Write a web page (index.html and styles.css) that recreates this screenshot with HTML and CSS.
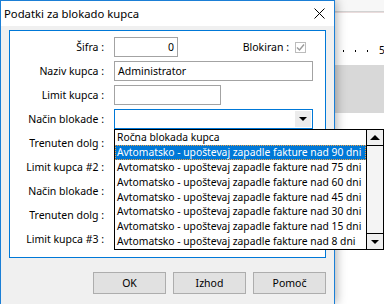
FILE: index.html
```html
<!DOCTYPE html>
<html lang="sl">
<head>
    <meta charset="UTF-8">
    <meta name="viewport" content="width=device-width, initial-scale=1.0">
    <title>Podatki za blokado kupca</title>
    <link rel="stylesheet" href="styles.css">
</head>
<body>
    <div class="screen">
        <div class="dialog">
            <div class="titlebar">
                <span class="title">Podatki za blokado kupca</span>
                <svg class="close" width="11" height="11" viewBox="0 0 11 11">
                    <path d="M0.5 0.5 L10.5 10.5 M10.5 0.5 L0.5 10.5" stroke="#000" stroke-width="1" fill="none"/>
                </svg>
            </div>

            <div class="dialog-body">
                <div class="panel">
                    <div class="form">
                        <label class="label">Šifra :</label>
                        <div class="field-row">
                            <div class="textbox w-short">0</div>
                            <div class="blokiran">
                                <span>Blokiran :</span>
                                <span class="checkbox">
                                    <svg width="9" height="9" viewBox="0 0 9 9">
                                        <path d="M1 4.5 L3.5 7 L8 1.5" stroke="#9a9a9a" stroke-width="1.4" fill="none"/>
                                    </svg>
                                </span>
                            </div>
                        </div>

                        <label class="label">Naziv kupca :</label>
                        <div class="textbox w-full">Administrator</div>

                        <label class="label">Limit kupca :</label>
                        <div class="textbox w-mid"></div>

                        <label class="label">Način blokade :</label>
                        <div class="select-wrap">
                            <div class="select">
                                <span class="select-btn"><span class="arrow-down"></span></span>
                            </div>
                            <div class="dropdown">
                                <div class="options">
                                    <div class="option">Ročna blokada kupca</div>
                                    <div class="option selected">Avtomatsko - upoštevaj zapadle fakture nad 90 dni</div>
                                    <div class="option">Avtomatsko - upoštevaj zapadle fakture nad 75 dni</div>
                                    <div class="option">Avtomatsko - upoštevaj zapadle fakture nad 60 dni</div>
                                    <div class="option">Avtomatsko - upoštevaj zapadle fakture nad 45 dni</div>
                                    <div class="option">Avtomatsko - upoštevaj zapadle fakture nad 30 dni</div>
                                    <div class="option">Avtomatsko - upoštevaj zapadle fakture nad 15 dni</div>
                                    <div class="option">Avtomatsko - upoštevaj zapadle fakture nad 8 dni</div>
                                </div>
                                <div class="scrollbar">
                                    <div class="sb-btn"><span class="arrow-up"></span></div>
                                    <div class="sb-track"></div>
                                    <div class="sb-btn"><span class="arrow-down"></span></div>
                                </div>
                            </div>
                        </div>

                        <label class="label">Trenuten dolg :</label>
                        <div class="textbox w-mid"></div>

                        <label class="label">Limit kupca #2 :</label>
                        <div class="textbox w-mid"></div>

                        <label class="label">Način blokade :</label>
                        <div class="textbox w-full"></div>

                        <label class="label">Trenuten dolg :</label>
                        <div class="textbox w-mid"></div>

                        <label class="label">Limit kupca #3 :</label>
                        <div class="textbox w-mid"></div>
                    </div>
                </div>

                <div class="buttons">
                    <div class="button">OK</div>
                    <div class="button">Izhod</div>
                    <div class="button">Pomoč</div>
                </div>
            </div>
        </div>

        <div class="backwin">
            <div class="bw-top"></div>
            <div class="bw-line"></div>
            <div class="bw-ruler">
                <span class="dot"></span>
                <span class="dot"></span>
                <span class="dot"></span>
                <span class="num">5</span>
            </div>
            <div class="bw-band"></div>
            <div class="bw-rest"></div>
        </div>
    </div>
</body>
</html>
```

FILE: styles.css
```css
* {
    box-sizing: border-box;
}

html, body {
    margin: 0;
}

body {
    width: 384px;
    height: 304px;
    overflow: hidden;
    background-color: #fff;
    color: #000;
    font-family: "Noto Sans", "Open Sans", sans-serif;
    font-size: 10.5px;
}

.screen {
    display: flex;
    height: 304px;
    overflow: hidden;
}

/* dialog window */
.dialog {
    position: relative;
    z-index: 1;
    flex: none;
    width: 335px;
    height: 304px;
    background-color: #f0f0f0;
    border: 1px solid #1b7fd6;
    border-bottom: none;
    box-shadow: 1px 0 10px rgba(0, 0, 0, 0.35);
}

.titlebar {
    display: flex;
    align-items: center;
    justify-content: space-between;
    height: 25px;
    padding: 0 9px 0 3px;
    background-color: #fff;
}

.title {
    font-size: 11.3px;
}

.dialog-body {
    padding: 4px 8px 0 8px;
}

.panel {
    height: 228px;
    padding: 6px 0 0 0;
    background-color: #fff;
    border: 1px solid #0078d7;
}

.form {
    display: grid;
    grid-template-columns: 94px 1fr;
    grid-auto-rows: 20px;
    column-gap: 10px;
    row-gap: 4px;
    align-items: center;
}

.label {
    text-align: right;
    white-space: nowrap;
}

.field-row {
    display: flex;
    align-items: center;
}

.textbox {
    height: 20px;
    padding: 0 3px;
    line-height: 18px;
    background-color: #fff;
    border: 1px solid #a3a3a3;
    white-space: nowrap;
}

.w-short {
    width: 64px;
    text-align: right;
}

.w-mid {
    width: 107px;
}

.w-full {
    width: 199px;
}

.blokiran {
    display: flex;
    align-items: center;
    gap: 6px;
    margin-left: auto;
    margin-right: 19px;
}

.checkbox {
    display: flex;
    align-items: center;
    justify-content: center;
    width: 11px;
    height: 11px;
    border: 1px solid #bcbcbc;
    background-color: #fff;
}

/* combo box */
.select-wrap {
    position: relative;
    height: 20px;
}

.select {
    display: flex;
    justify-content: flex-end;
    width: 199px;
    height: 20px;
    border: 1px solid #0078d7;
    background-color: #fff;
}

.select-btn {
    display: flex;
    align-items: center;
    justify-content: center;
    width: 16px;
    height: 16px;
    margin: 1px;
    background-color: #ececec;
}

.arrow-down {
    width: 0;
    height: 0;
    border-left: 4px solid transparent;
    border-right: 4px solid transparent;
    border-top: 4px solid #000;
}

.arrow-up {
    width: 0;
    height: 0;
    border-left: 5px solid transparent;
    border-right: 5px solid transparent;
    border-bottom: 5px solid #000;
}

.dropdown {
    position: absolute;
    top: 20px;
    left: 0;
    display: flex;
    width: 270px;
    height: 121px;
    background-color: #fff;
    border: 1px solid #000;
}

.options {
    flex: 1;
    font-size: 10.3px;
}

.option {
    height: 14.9px;
    padding-left: 2px;
    line-height: 14.9px;
    white-space: nowrap;
}

.option.selected {
    background-color: #0078d7;
    color: #fff;
    outline: 1px dotted #f0a040;
    outline-offset: -1px;
}

.scrollbar {
    display: flex;
    flex-direction: column;
    width: 17px;
    background-color: #f0f0f0;
    border-left: 1px solid #000;
}

.sb-btn {
    display: flex;
    align-items: center;
    justify-content: center;
    height: 16px;
    background-color: #f0f0f0;
}

.sb-btn:first-child {
    border-bottom: 1px solid #000;
}

.sb-btn:last-child {
    border-top: 1px solid #000;
}

.sb-track {
    flex: 1;
    background-color: #f4f4f4;
}

/* dialog buttons */
.buttons {
    display: flex;
    justify-content: flex-end;
    gap: 7px;
    margin-top: 14px;
}

.button {
    width: 73px;
    height: 22px;
    line-height: 20px;
    text-align: center;
    background-color: #e1e1e1;
    border: 1px solid #adadad;
}

/* window behind the dialog */
.backwin {
    flex: 1;
    display: flex;
    flex-direction: column;
    background-color: #fff;
}

.bw-top {
    height: 11px;
    background-color: #f7f7f7;
}

.bw-line {
    height: 2px;
    border-top: 1px solid #d2d2d2;
    border-bottom: 1px solid #eadcdc;
}

.bw-ruler {
    display: flex;
    align-items: flex-end;
    gap: 11px;
    height: 52px;
    padding: 0 0 10px 8px;
}

.dot {
    width: 1px;
    height: 2px;
    margin-bottom: 3px;
    background-color: #000;
}

.num {
    line-height: 10px;
    font-size: 10px;
}

.bw-band {
    height: 48px;
    background-color: #d8d8d8;
}

.bw-rest {
    flex: 1;
    background-color: #fff;
}
```
